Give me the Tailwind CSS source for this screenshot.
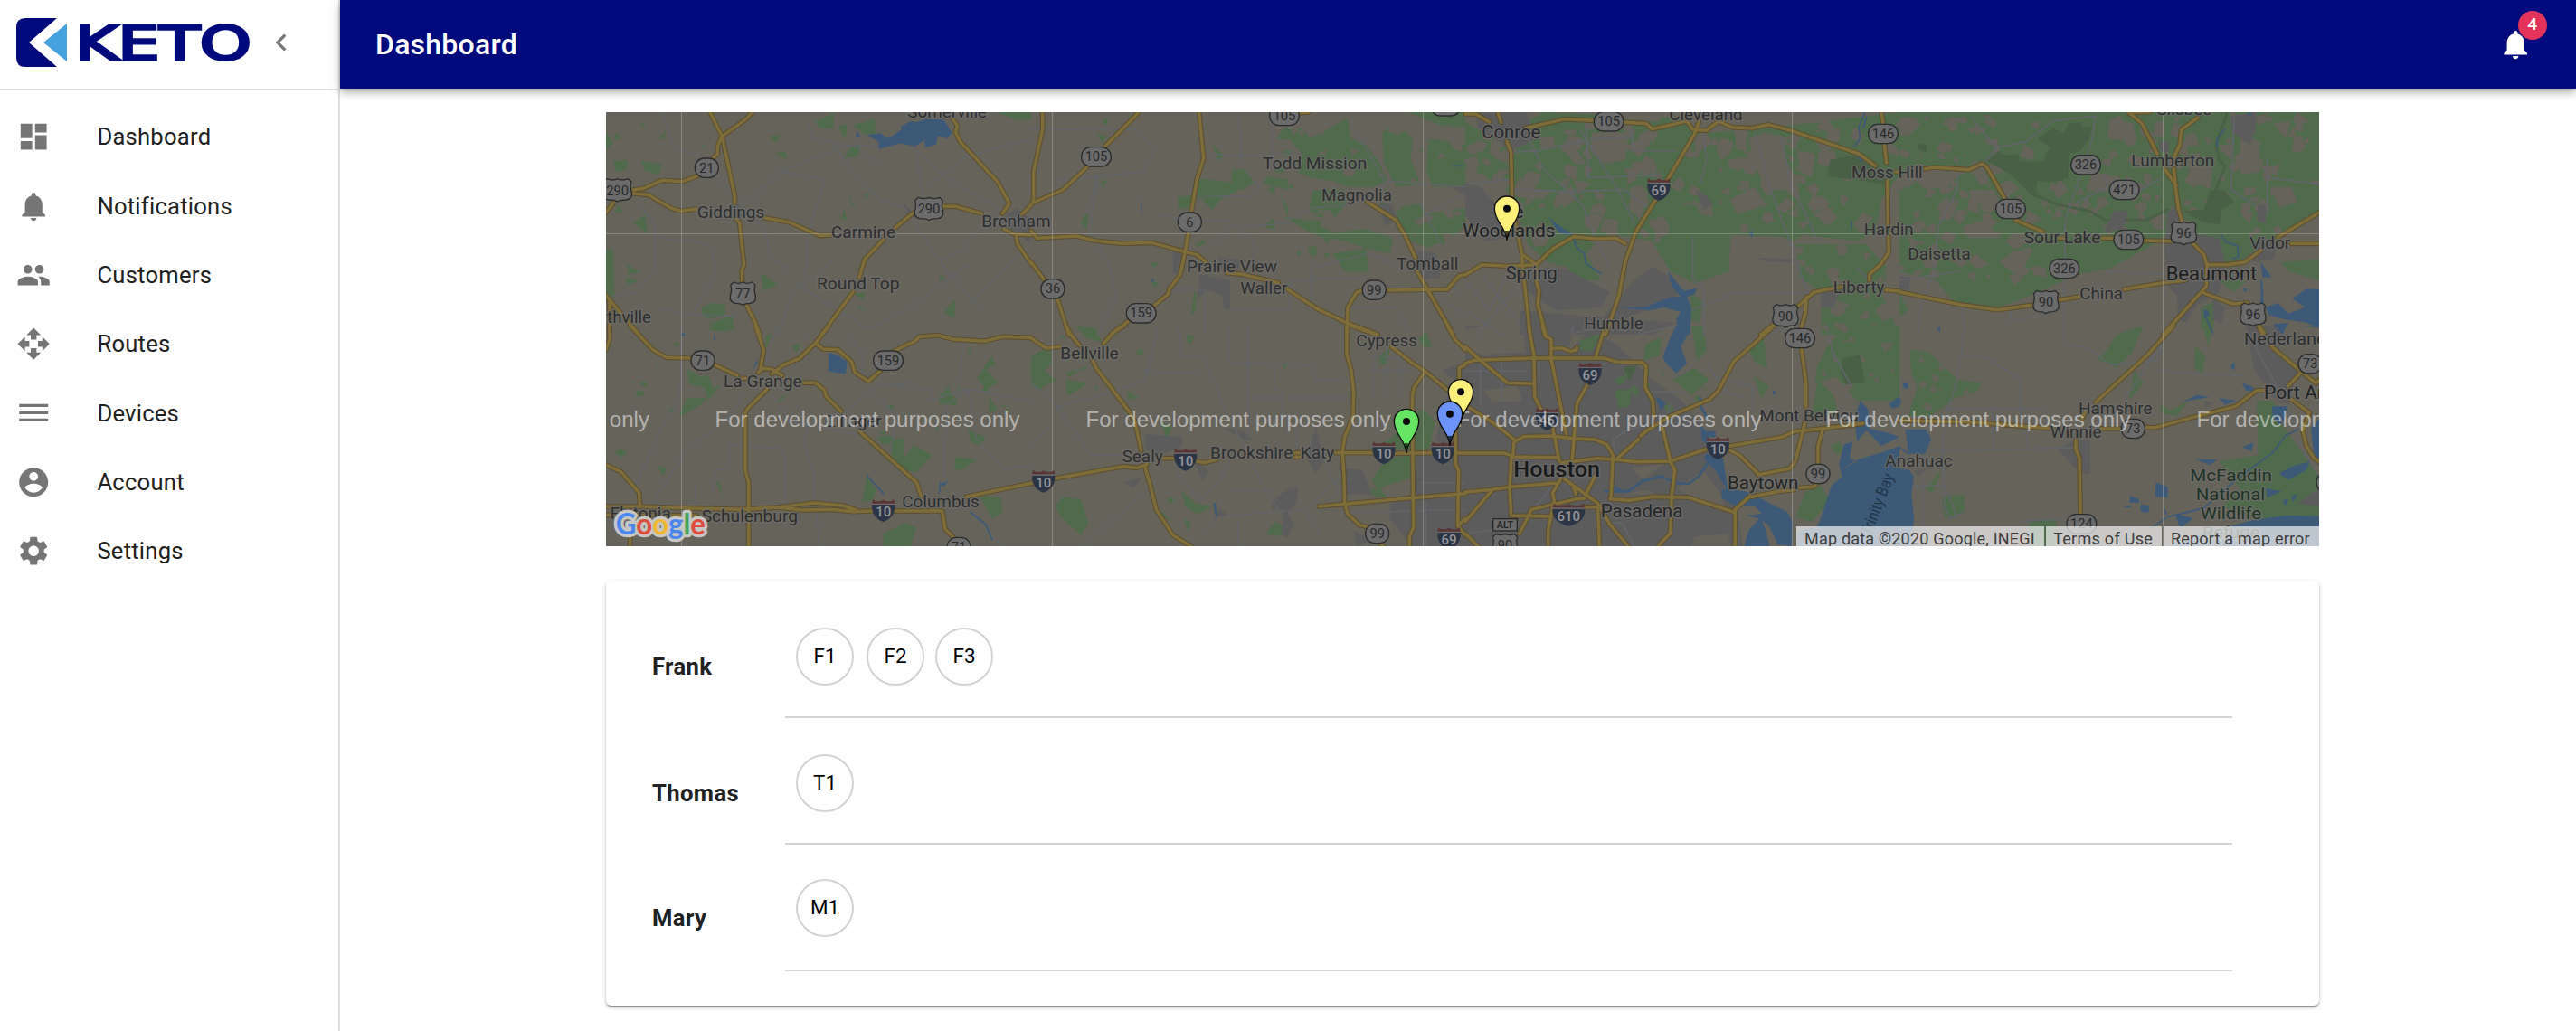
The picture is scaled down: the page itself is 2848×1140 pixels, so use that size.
<!DOCTYPE html>
<html lang="en">
<head>
<meta charset="utf-8">
<title>Dashboard</title>
<script src="https://cdn.jsdelivr.net/npm/@tailwindcss/browser@4"></script>
</head>
<body class="bg-white font-['Roboto',sans-serif] text-[#212121]">
<div class="flex h-[1140px] w-[2848px] overflow-hidden">

  <aside class="flex w-[376px] shrink-0 flex-col border-r-2 border-[#e0e0e0]">
    <div class="flex h-[100px] items-center border-b-2 border-[#e0e0e0] pb-1 pl-[18px]">
      <svg class="h-[54px] w-[56px]" viewBox="0 0 56 54" aria-hidden="true"><path fill="#000a7c" d="M10 0H45L14 27 45 54H10Q0 54 0 44V10Q0 0 10 0Z"/><path fill="#45a2df" d="M56 6V48L30 27Z"/></svg>
      <svg class="ml-2 h-[54px] w-[196px] overflow-visible" viewBox="0 0 196 54"><text x="1" y="45.500" font-family="DejaVu Sans" font-size="51" fill="#000a7c" stroke="#000a7c" stroke-width="3" textLength="195" lengthAdjust="spacingAndGlyphs">KETO</text></svg>
      <svg class="ml-[14px] size-[38px]" viewBox="0 0 24 24" fill="#757575"><path d="M15.410 7.410L14 6l-6 6 6 6 1.410-1.410L10.830 12z"/></svg>
    </div>
    <nav class="flex flex-col pt-[13.500px] text-[25.600px] tracking-[0.240px]">
      <a class="flex h-[76.330px] items-center gap-[51px] pl-[18px]"><svg class="size-[38.400px]" viewBox="0 0 24 24" fill="#757575"><path d="M3 13h8V3H3v10zm0 8h8v-6H3v6zm10 0h8V11h-8v10zm0-18v6h8V3h-8z"/></svg>Dashboard</a>
      <a class="flex h-[76.330px] items-center gap-[51px] pl-[18px]"><svg class="size-[38.400px]" viewBox="0 0 24 24" fill="#757575"><path d="M12 22c1.100 0 2-.9 2-2h-4c0 1.100.89 2 2 2zm6-6v-5c0-3.070-1.640-5.640-4.500-6.320V4c0-.83-.67-1.500-1.500-1.500s-1.500.67-1.500 1.500v.68C7.630 5.360 6 7.920 6 11v5l-2 2v1h16v-1l-2-2z"/></svg>Notifications</a>
      <a class="flex h-[76.330px] items-center gap-[51px] pl-[18px]"><svg class="size-[38.400px]" viewBox="0 0 24 24" fill="#757575"><path d="M16 11c1.660 0 2.990-1.340 2.990-3S17.660 5 16 5c-1.660 0-3 1.340-3 3s1.340 3 3 3zm-8 0c1.660 0 2.990-1.340 2.990-3S9.660 5 8 5C6.340 5 5 6.340 5 8s1.340 3 3 3zm0 2c-2.330 0-7 1.170-7 3.500V19h14v-2.500c0-2.330-4.670-3.500-7-3.500zm8 0c-.29 0-.62.020-.97.050 1.160.84 1.970 1.970 1.970 3.450V19h6v-2.500c0-2.330-4.670-3.500-7-3.500z"/></svg>Customers</a>
      <a class="flex h-[76.330px] items-center gap-[51px] pl-[18px]"><svg class="size-[38.400px]" viewBox="0 0 24 24" fill="#757575"><path d="M10 9h4V6h3l-5-5-5 5h3v3zm-1 1H6V7l-5 5 5 5v-3h3v-4zm14 2l-5-5v3h-3v4h3v3l5-5zm-9 3h-4v3H7l5 5 5-5h-3v-3z"/></svg>Routes</a>
      <a class="flex h-[76.330px] items-center gap-[51px] pl-[18px]"><svg class="size-[38.400px]" viewBox="0 0 24 24" fill="#757575"><path d="M2 15.500v2h20v-2H2zm0-5v2h20v-2H2zm0-5v2h20v-2H2z"/></svg>Devices</a>
      <a class="flex h-[76.330px] items-center gap-[51px] pl-[18px]"><svg class="size-[38.400px]" viewBox="0 0 24 24" fill="#757575"><path d="M12 2C6.480 2 2 6.480 2 12s4.480 10 10 10 10-4.480 10-10S17.520 2 12 2zm0 3c1.660 0 3 1.340 3 3s-1.340 3-3 3-3-1.340-3-3 1.340-3 3-3zm0 14.200c-2.500 0-4.710-1.280-6-3.220.030-1.990 4-3.080 6-3.080 1.990 0 5.970 1.090 6 3.080-1.290 1.940-3.500 3.220-6 3.220z"/></svg>Account</a>
      <a class="flex h-[76.330px] items-center gap-[51px] pl-[18px]"><svg class="size-[38.400px]" viewBox="0 0 24 24" fill="#757575"><path d="M19.140 12.940c.040-.3.060-.61.060-.94 0-.32-.020-.64-.070-.94l2.030-1.580c.18-.14.23-.41.120-.61l-1.920-3.320c-.12-.22-.37-.29-.59-.22l-2.390.96c-.5-.38-1.030-.7-1.620-.94l-.36-2.540c-.040-.24-.24-.41-.48-.41h-3.840c-.24 0-.43.17-.47.41l-.36 2.540c-.59.24-1.130.57-1.620.94l-2.390-.96c-.22-.080-.47 0-.59.22L2.740 8.870c-.12.21-.080.47.120.61l2.030 1.580c-.050.3-.090.63-.090.94s.020.64.070.94l-2.030 1.580c-.18.14-.23.41-.12.61l1.920 3.320c.12.22.37.29.59.22l2.390-.96c.5.38 1.030.7 1.620.94l.36 2.540c.050.24.24.41.48.41h3.840c.24 0 .44-.17.47-.41l.36-2.540c.59-.24 1.130-.56 1.620-.94l2.390.96c.22.080.47 0 .59-.22l1.920-3.320c.12-.22.070-.47-.12-.61l-2.010-1.580zM12 15.600c-1.980 0-3.600-1.620-3.600-3.600s1.620-3.600 3.600-3.600 3.600 1.620 3.600 3.600-1.620 3.600-3.600 3.600z"/></svg>Settings</a>
    </nav>
  </aside>

  <div class="flex flex-1 flex-col">
    <header class="flex h-[98px] shrink-0 items-center justify-between bg-[#000a7c] pl-[39px] pr-[48px] text-white shadow-[0_3px_6px_-2px_rgba(0,0,0,0.2),0_6px_8px_0_rgba(0,0,0,0.14),0_2px_16px_0_rgba(0,0,0,0.12)]">
      <h1 class="text-[32px] font-medium leading-none tracking-[0.240px]">Dashboard</h1>
      <div class="relative size-[38.400px]">
        <svg class="size-[38.400px]" viewBox="0 0 24 24" fill="#fff"><path d="M12 22c1.100 0 2-.9 2-2h-4c0 1.100.89 2 2 2zm6-6v-5c0-3.070-1.640-5.640-4.500-6.320V4c0-.83-.67-1.500-1.500-1.500s-1.500.67-1.500 1.500v.68C7.630 5.360 6 7.920 6 11v5l-2 2v1h16v-1l-2-2z"/></svg>
        <span class="absolute -top-[18px] left-[22px] flex size-8 items-center justify-center rounded-full bg-[#e3335b] text-[19.200px] font-medium">4</span>
      </div>
    </header>

    <main class="flex flex-col gap-[38px] pl-[294px] pt-[26px]">
      <section class="relative h-[480px] w-[1894px] overflow-hidden bg-[#66635b]">
        <svg id="map" class="block h-[480px] w-[1894px]" viewBox="670 124 1894 480" font-family="Roboto"></svg>
        <div class="absolute bottom-0 right-0 flex h-[22px] gap-[2px] overflow-hidden whitespace-nowrap text-[18px] leading-[28px] text-[#3c3c3c]">
          <span class="w-[274px] bg-[#f5f5f5]/70 pl-[9px] tracking-[0.200px]">Map data ©2020 Google, INEGI</span>
          <span class="w-[128px] bg-[#f5f5f5]/70 pl-[8px] tracking-[0.300px]">Terms of Use</span>
          <span class="w-[172px] bg-[#f5f5f5]/70 pl-[8px] tracking-[0.200px]">Report a map error</span>
        </div>
      </section>

      <section class="h-[470px] w-[1894px] rounded-[6px] bg-white pl-[51px] pt-3 shadow-[0_2px_5px_0_rgba(0,0,0,0.2),0_2px_2px_0_rgba(0,0,0,0.14),0_3px_2px_-2px_rgba(0,0,0,0.3)]">
        <div class="flex h-[140px]">
          <div class="w-[147px] pt-[68px] text-[25.600px] font-bold leading-[30px] tracking-[0.400px]">Frank</div>
          <div class="flex w-[1600px] border-b-2 border-[#d3d3d3] pl-3 pt-10 text-[22.400px] text-black">
            <div class="flex size-16 items-center justify-center rounded-full border-2 border-[#d3d3d3]">F1</div>
            <div class="ml-[14px] flex size-16 items-center justify-center rounded-full border-2 border-[#d3d3d3]">F2</div>
            <div class="ml-3 flex size-16 items-center justify-center rounded-full border-2 border-[#d3d3d3]">F3</div>
          </div>
        </div>
        <div class="flex h-[140px]">
          <div class="w-[147px] pt-[68px] text-[25.600px] font-bold leading-[30px] tracking-[0.400px]">Thomas</div>
          <div class="flex w-[1600px] border-b-2 border-[#d3d3d3] pl-3 pt-10 text-[22.400px] text-black">
            <div class="flex size-16 items-center justify-center rounded-full border-2 border-[#d3d3d3]">T1</div>
          </div>
        </div>
        <div class="flex h-[140px]">
          <div class="w-[147px] pt-[66px] text-[25.600px] font-bold leading-[30px] tracking-[0.400px]">Mary</div>
          <div class="flex w-[1600px] border-b-2 border-[#d3d3d3] pl-3 pt-[38px] text-[22.400px] text-black">
            <div class="flex size-16 items-center justify-center rounded-full border-2 border-[#d3d3d3]">M1</div>
          </div>
        </div>
      </section>
    </main>
  </div>
</div>

<script>
// Map sheets: each holds coordinates at three units per pixel from its own origin.
const O = {A:[660,110],B:[1140,110],C:[1620,110],D:[2100,110],G:[660,360],H:[1140,360],I:[1620,360],J:[2100,360]};
const LAND='#66635b', GREEN='#4f6b4b', DARK='#4a6046', WATER='#3c5a78', URBAN='#5c5c5d', MINOR='#62656a';
let out='';
const g=(k,s)=>{out+=`<g transform="translate(${O[k]}) scale(.33333)">${s}</g>`};
const polys=(k,c,list)=>g(k,list.split(';').map(p=>`<polygon fill="${c}" points="${p.trim()}"/>`).join(''));
const lines=(k,c,w,list)=>g(k,list.split(';').map(p=>`<polyline fill="none" stroke="${c}" stroke-width="${w}" stroke-linejoin="round" stroke-linecap="round" points="${p.trim()}"/>`).join(''));
let seed=7; const rnd=()=>(seed=(seed*16807)%2147483647)/2147483647;
// Irregular field and woodland parcels inside a rectangle.
function scatter(k,c,x,y,w,h,n,size){
  let s='';
  for(let i=0;i<n;i++){
    const cx=x+rnd()*w, cy=y+rnd()*h, r=size*(.35+rnd()*.8), m=3+Math.floor(rnd()*4), a0=rnd()*6.28;
    let p='';
    for(let j=0;j<m;j++){const a=a0+j*6.283/m+rnd()*.7, q=r*(.45+rnd()*.75); p+=(cx+Math.cos(a)*q).toFixed(0)+','+(cy+Math.sin(a)*q*.9).toFixed(0)+' ';}
    s+=`<polygon fill="${c}" points="${p}"/>`;
  }
  g(k,s);
}

// Woodland
polys('A',GREEN,'30,495 55,498 58,660 30,655;348,690 380,675 425,680 425,715 370,728 348,715;370,745 450,715 455,765 410,760;545,575 600,615 552,635;55,205 100,200 100,230 60,240;145,205 215,215 205,250 160,235;722,75 785,45 785,95 740,95;850,85 920,65 925,115 885,115;800,90 830,80 825,135;100,545 145,575 103,578;98,590 140,602 100,615;568,122 615,118 590,142;592,180 625,170 630,198;835,315 860,365 845,350;820,365 828,398 810,398;885,315 908,310 892,328;30,105 52,145 30,170;1325,42 1440,42 1440,65 1395,68;1150,705 1190,660 1185,725;840,160 875,150 865,190 820,195;1135,580 1155,590 1140,603;852,645 890,640 880,665;862,682 895,698 870,696;60,110 82,128 58,135;205,130 228,103 222,132;340,165 360,140 352,160;60,375 70,350 88,375;120,410 160,380 168,445 145,430;138,85 160,78 158,93');
polys('B',GREEN,'215,110 250,120 240,145;555,262 660,275 690,300 630,330 600,365 565,330 550,330;485,325 530,318 535,365 490,360;665,235 710,230 740,275 700,300 665,290;815,130 840,92 900,95 925,130 1000,90 1050,62 1060,130 1110,150 1150,200 1180,270 1140,290 1050,290 1000,270 930,260 880,240 900,180 860,135;1165,110 1210,75 1265,130 1260,200 1290,280 1210,290 1170,210;1320,130 1440,150 1440,290 1330,290 1310,230;935,300 1040,300 1050,340 1000,400 920,380;1000,510 1110,495 1120,570 1040,570;840,390 920,400 1000,440 1110,430 1200,460 1190,510 1100,490 1040,470 940,450;1210,360 1290,345 1310,380 1440,360 1440,420 1340,500 1260,470 1210,430;1250,42 1440,42 1440,90 1370,90;780,255 850,265 855,300 770,280;830,320 855,360 850,390;600,150 640,185 620,205;175,385 190,380 185,430 165,410;555,475 578,465 575,480 545,488;540,640 548,635 545,700 530,718;390,540 425,543 405,558;400,600 430,615 405,622;235,70 258,62 248,88;230,275 255,265 235,295');
polys('C',GREEN,'0,75 100,130 260,42 680,60 800,110 1000,95 1440,42 1440,250 1380,330 1360,440 1300,470 1120,450 1085,470 1050,455 880,450 875,570 760,610 680,570 620,470 500,450 430,480 360,560 270,540 200,470 160,330 60,250 0,230;380,480 450,600 380,600 340,560;1095,480 1330,480 1400,560 1380,640 1440,780 1180,780 1180,640 1110,590;750,640 785,670 780,740 745,730');
polys('D',GREEN,'0,42 1392,42 1392,370 1290,440 1180,500 1100,560 1000,480 890,440 860,470 700,560 590,580 460,640 330,690 180,670 120,600 0,570;1060,600 1150,600 1110,640;1265,540 1392,530 1392,600 1290,570;1000,690 1050,670 1040,760 1000,760;0,640 30,700 0,720');
polys('G',GREEN,'300,145 345,170 370,165 385,210 410,195 370,250 355,205 305,195;980,375 1020,375 1020,440 1050,395 1110,430 1060,485 1000,480 975,430;370,15 385,0 455,0 430,20;1260,175 1310,100 1320,130 1290,145 1330,190 1290,210;1135,235 1165,205 1185,240 1200,230 1190,265 1135,260;930,370 975,365 985,390 945,395;895,495 925,545 915,580 880,585;60,420 80,408 100,422 80,438;200,465 230,475 220,500;395,520 408,520 420,570;300,240 270,305 340,265 365,240;1270,565 1340,570 1345,620 1310,640;1185,475 1190,435 1260,445 1210,480;950,690 1025,655 1060,670 1040,732 950,732;600,250 630,225 610,255;560,30 580,28 560,80;1230,345 1290,370 1270,400 1240,385;645,65 678,62 660,90;1300,235 1330,280 1300,290');
polys('H',GREEN,'80,600 105,568 165,577 190,655 165,695 100,635;1130,510 1180,440 1260,430 1260,505 1180,530 1150,545;1150,400 1200,370 1275,290 1305,278 1340,320 1320,410 1250,415;0,100 60,70 70,120 45,150 85,180 30,210 0,200;430,320 470,335 450,375;425,610 480,660 430,625;500,548 545,590 600,600 550,625 510,600;515,30 540,35 530,60 518,55;835,125 850,125 842,152;780,690 810,648 840,670 830,700;115,180 190,190 120,235;450,568 482,575 460,590;1285,40 1310,20 1330,70 1300,72;1155,100 1190,75 1180,130 1155,125;320,215 360,240 320,245;115,150 145,160 125,172;340,90 370,75 370,98;505,640 530,655 520,682;1120,545 1160,540 1180,572 1140,565;150,0 180,40 235,55 215,10');
polys('I',URBAN,'0,0 370,0 500,60 620,180 720,250 780,330 850,440 860,560 900,600 920,732 0,732');
polys('I',LAND,'0,15 60,0 190,0 200,90 60,95 0,90;60,215 170,200 190,250 90,255;700,540 790,480 850,560 860,600 790,590;760,700 870,690 880,732 750,732;550,470 660,460 590,510;520,560 600,545 640,560;840,240 1000,240 1010,330 880,350;360,0 430,0 340,90');
polys('I',GREEN,'380,50 450,25 420,85 380,80;600,60 650,40 645,100 590,115;495,215 550,210 545,270 510,275;690,180 760,140 810,180 750,230;525,140 570,150 530,180;1200,70 1260,0 1440,0 1440,250 1300,250 1230,170 1160,190 1165,140;940,80 990,40 1000,140 960,120;1210,400 1240,385 1255,410 1235,430;1130,550 1180,535 1210,580 1150,650 1095,635;750,0 790,0 800,80 770,120;1170,180 1220,230 1240,300 1150,300 1160,230;960,170 1010,200 980,240');
polys('J',GREEN,'35,80 100,90 140,130 195,180 270,190 260,215 190,240 160,260 100,300 30,300 60,200 40,160;720,30 810,0 770,90 720,140 655,110 690,80;780,150 810,190 760,250;1185,250 1240,250 1270,330 1392,500 1392,640 1180,640 1070,600 1130,540 1060,450 1190,430;980,70 1015,100 1005,160 980,140;1005,0 1040,0 1025,70;140,570 215,560 215,620 150,640;90,540 140,475 110,560;865,260 900,280 960,250 920,300 870,290;430,645 520,645 520,732 430,732');
// Clearings
polys('C',LAND,'420,110 540,110 530,200 460,215 415,170;490,42 660,42 640,75 500,62;940,130 990,110 1050,120 1060,200 1100,260 1110,340 1060,300 1000,300 960,220;150,290 290,300 260,330 170,325;880,330 960,290 1000,350 900,380;560,290 600,330 580,400 540,360;1100,170 1160,180 1150,260 1110,240;580,110 620,120 600,150 570,140');
polys('D',LAND,'0,60 60,60 40,110 0,120;60,210 190,250 180,280 90,300 40,260;230,300 320,300 300,350 240,340;140,350 200,330 170,400 130,400;210,420 290,400 330,460 230,460;380,500 440,500 400,590 330,540;410,150 450,170 440,200 400,190;700,60 780,80 770,140 690,130;640,240 700,250 690,310 620,300;960,210 1040,220 1030,290 960,280;1130,130 1190,150 1200,240 1130,250;1230,290 1300,290 1320,340 1260,360;1240,80 1300,70 1280,130');
scatter('B',LAND,840,90,590,420,36,28);
scatter('C',LAND,20,80,640,390,110,36);
scatter('C',LAND,700,90,730,340,60,34);
scatter('C',LAND,1100,480,330,290,24,30);
scatter('D',LAND,0,60,460,540,95,34);
scatter('D',LAND,480,280,560,150,40,28);
scatter('D',LAND,660,60,380,220,30,30);
scatter('D',LAND,1060,60,320,400,46,30);
scatter('I',LAND,1180,10,250,220,12,22);
scatter('J',LAND,60,100,170,180,14,16);
scatter('B',GREEN,760,100,600,460,26,20);
scatter('I',GREEN,480,150,330,160,10,20);
scatter('G',GREEN,920,60,480,420,10,14);
scatter('G',GREEN,40,40,260,260,8,15);
scatter('H',GREEN,20,10,300,200,8,14);
// Deep forest
polys('D',DARK,'460,130 510,95 545,110 560,80 600,75 605,90 640,90 630,130 600,170 565,180 560,260 520,272 455,272 455,310 480,330 525,350 440,320 370,250 290,205 330,170 350,185 395,180 400,205 480,205 485,180 500,160;1030,300 1075,300 1110,340 1070,365 1060,415 1000,405 940,370 1010,365;60,148 90,148 90,178 62,165');
polys('C',DARK,'1210,200 1320,180 1400,250 1390,280 1200,255');
lines('D',DARK,9,'480,330 530,350 630,370 680,400 750,400 820,400 890,365;1085,50 1050,150 1060,200 1080,220 1050,300');
polys('I',DARK,'1250,110 1310,95 1325,190 1260,195 1245,150;525,140 570,130 545,180');
// Built-up areas
polys('C',URBAN,'0,280 50,290 120,370 140,460 60,470 0,380;35,45 200,42 240,130 150,170 40,90;560,600 620,555 680,590 720,640 640,680 500,740 460,720;160,560 330,560 480,640 450,690 300,700 210,640;765,300 800,320 825,345 790,365;1180,620 1240,640 1220,690 1180,690;180,700 420,720 700,740 620,780 180,780;965,525 1090,530 1080,540 1000,538');
polys('B',URBAN,'470,500 510,520 500,580 470,575;560,580 660,600 660,695 640,695 635,650 580,630 550,665;1150,350 1195,345 1215,400 1175,420;1280,500 1340,510 1360,590 1290,600;1400,290 1440,285 1440,325;620,525 690,530 690,560 630,560');
polys('D',URBAN,'890,370 930,355 950,440 1060,460 1080,540 1060,640 990,680 950,740 925,730 920,650 890,620 880,500;1100,55 1185,42 1180,110 1160,150 1105,110;710,370 760,370 740,430 680,440;1190,350 1215,350 1215,410 1185,400;1200,450 1250,490 1240,530 1170,540;860,140 895,140 890,180 865,170;0,585 35,590 30,650 0,650;1040,660 1080,690 1070,745 1040,730');
polys('H',URBAN,'1270,430 1440,430 1440,732 1260,732 1190,640 1190,590 1260,560;1020,470 1100,480 1130,560 1040,560;915,440 945,330 970,450 945,490;800,580 855,540 885,535 880,590 850,620 870,660 850,705 830,690 840,610 800,610;540,450 590,480 570,515;640,340 700,350 740,380 710,380;380,360 500,370 500,400 430,430 380,410;1380,240 1440,230 1440,420 1340,380;1360,150 1440,120 1440,200;310,520 370,500 340,540;610,600 650,625 610,640;1070,680 1130,710 1080,732');
polys('J',URBAN,'1150,0 1260,0 1260,90 1320,150 1290,260 1240,240 1175,140;525,410 580,380 632,380 632,492 600,490;1320,590 1392,540 1392,600;1010,250 1040,255 1015,275;45,480 90,475 60,500');
polys('A',URBAN,'1360,380 1395,360 1440,400 1435,480 1400,440 1350,430;1020,350 1045,370 1025,385;440,345 470,330 480,395 450,400');

// Secondary roads
lines('A',MINOR,4,'215,50 260,160 340,190 500,370 560,440 575,520 635,565;770,125 840,225 940,335 1020,360 1140,540 1240,660 1290,700;490,350 610,240 830,150 1060,160;195,460 330,470 380,495 395,580 320,710;140,350 190,410 195,560 130,640 40,655;615,240 755,265 700,450 690,600;1140,535 1210,500 1330,360 1160,260 1060,170 1080,330;1240,670 1440,480;660,610 900,760 1040,690 1240,540;1100,290 1220,190 1440,130;700,80 720,130 870,160 950,230;200,690 280,710 460,720;790,530 650,640 600,780');
lines('B',MINOR,4,'0,100 350,98 410,170 370,240 90,270;190,375 220,250 195,440 260,550 280,660 220,780;420,380 500,400 650,400 740,470 740,560;550,180 690,185 880,180;690,60 700,220 760,300 720,320 640,320 550,325;850,400 930,360 1060,350 1180,280 1060,80;580,500 660,425 860,410;930,700 930,560 1120,510 1260,570;1180,270 1440,290;460,630 575,630 575,780;660,695 860,695 860,600 1120,590;1310,380 1410,330 1440,310;1290,340 1360,480;1340,640 1440,720;1380,600 1440,660;800,240 800,50;1040,690 1210,690 1250,760');
lines('C',MINOR,5,'150,175 240,170 430,130 560,125;210,130 260,230 390,350 440,480 480,560;160,300 330,305 530,300 620,370;560,410 500,290 380,100;550,100 560,170 700,170;960,110 1010,290 1080,480 1135,640;1050,130 1080,280 1170,470;790,100 800,200 780,280;0,280 160,265;400,80 410,260 640,250;755,455 755,600 790,620 790,780;1135,645 900,640 700,720;1300,560 1380,640;0,600 80,700 150,560;40,780 170,620;0,700 120,780;60,590 180,740');
lines('D',MINOR,5,'650,50 640,130 550,400 545,760;240,60 320,160 420,140 510,70 650,55;320,165 280,210;195,240 190,300 130,420 110,590 70,680 60,780;590,340 690,290 680,250;800,300 870,260;1110,60 1100,300 1180,350;1220,200 1220,380;1220,260 1392,280;0,600 200,570;210,690 215,780;370,700 370,735 530,700;690,570 880,580 880,640');
lines('G',MINOR,4,'280,0 275,240 215,340 170,440 110,560;440,390 435,475 390,480 385,560;440,395 520,400 620,410 625,600;490,230 430,310 300,410 180,590;600,0 560,120;680,10 700,40;820,20 880,90 880,170;720,600 720,480 690,400 695,320;940,240 990,300 975,420;970,195 1110,215 1105,250 1230,210;1240,210 1160,260 1150,500;1230,210 1260,380 1350,480 1440,460;1220,20 1200,210;730,620 735,732;1260,640 1340,732;810,300 930,200 1050,190;580,230 640,320 860,360;1230,210 1440,250;325,530 325,600');
lines('H',MINOR,4,'85,270 200,240 380,180 420,0;85,270 200,430 300,430;85,265 0,190;490,0 500,100 570,100 650,290 720,430;655,0 655,125 940,130 940,180 1060,185;720,0 720,370;720,240 1060,240;805,130 805,210 835,215 835,300;370,150 560,160;0,400 60,330;480,480 560,580 620,520 660,450;610,635 910,610 960,700;685,640 685,732;170,732 370,560;560,690 620,640;730,460 820,610;660,545 800,550;880,440 880,300 720,320;920,600 1030,500;940,640 1060,500;980,470 1030,570;1120,100 1250,110;1120,150 1250,150;1140,60 1140,240;1180,60 1180,240;1220,60 1220,240;1060,620 1440,610;1290,520 1440,522;1310,590 1310,732');
lines('I',MINOR,5,'500,440 490,380 530,350 600,330;0,150 200,150;50,120 50,260;120,120 120,250;350,30 360,0;360,25 480,0;570,30 700,0;600,220 720,220;680,260 660,330;700,170 760,130;860,180 950,200 960,340;800,130 870,220 920,240;1220,90 1280,200;210,630 290,530;465,655 520,655 560,732;0,690 90,680;905,670 905,732;1200,0 1220,100;990,20 1110,10');
lines('J',MINOR,5,'215,0 205,100 185,210 160,270 140,410 40,420;205,102 290,105 400,180 400,280 430,405;140,415 580,405;165,275 480,275;310,280 310,405;545,0 550,60 630,75 700,130 860,115 870,60 750,240;860,150 1000,160 1140,165;80,500 75,732;50,530 150,530 190,630;145,420 150,600 170,640 210,620;1160,30 1250,200;1290,280 1330,400 1390,500;400,650 540,640');

// Water
polys('A',WATER,'895,118 940,112 965,130 1010,100 1008,90 1040,72 1060,75 1090,65 1150,67 1178,110 1160,130 1130,120 1125,150 1090,158 1085,135 1055,155 1005,145 935,165 935,140;858,130 862,105 875,122;280,772 295,780 280,780');
polys('B',WATER,'365,330 368,350 365,375 374,383 363,370;390,602 408,594 405,605;1395,218 1440,216 1415,224');
polys('C',WATER,'672,570 700,605 725,635 770,625 760,645 735,655 750,690 745,780 705,780 700,730 715,705 660,690 610,700 510,690 600,688 655,665 690,655 715,655 685,620;275,390 320,425 355,445 335,450 310,440;940,445 953,433 953,458;1295,180 1320,190 1315,210;1277,400 1284,410 1282,440');
lines('C',WATER,5,'350,445 370,490 395,512 400,545 450,577;1325,45 1305,90 1310,130 1290,155;1330,60 1320,95');
polys('D',WATER,'1198,540 1235,590 1205,590;1303,660 1350,628 1392,630 1392,760 1350,740 1280,730 1225,715 1215,690 1255,675 1290,710 1345,690;1140,627 1155,628 1146,642;1008,700 1022,697 1028,715 1012,725;123,763 135,755 135,773;1152,50 1160,42 1172,52;1205,605 1208,680 1215,690 1195,690;1240,745 1290,740 1270,780');
lines('D',WATER,5,'1080,98 1055,130 1053,155;1070,450 1080,470 1120,485 1125,520 1105,530;1015,720 1040,775;1200,600 1203,690');
polys('G',WATER,'768,90 800,98 815,112 830,118 825,160 768,152;516,150 530,112 532,125;388,25 393,40 387,55;280,25 295,32 282,34;1140,525 1165,515 1150,535');
lines('G',WATER,5,'895,497 950,557;1140,520 1135,555;1240,620 1290,660 1310,708');
polys('H',WATER,'603,588 613,590 617,632 612,632');
polys('I',WATER,'740,0 735,35 715,70 735,125 700,158 670,130 655,105 680,40 700,0;630,235 665,255 650,285;1310,250 1335,275 1345,330 1300,385 1290,310;1440,400 1385,420 1300,445 1245,480 1240,460 1255,395 1285,385 1275,440 1300,450 1245,480 1250,500 1215,530 1175,650 1165,668 1105,680 1098,732 1440,732;925,732 940,680 975,640 930,630 985,625 960,600 900,600 850,572 850,545 865,540 830,480 790,440 800,425 855,440 870,540 950,555 1010,590 1070,620 1085,650 1082,732 1032,725 985,640 1010,732;780,330 800,350 830,350 830,370 800,370 805,395 785,380;1018,213 1032,222 1022,232;1405,260 1440,235 1440,270 1415,275;1310,325 1350,345 1400,355 1440,370 1380,400');
lines('I',WATER,8,'465,550 540,550 590,515 650,500 700,522 740,525 775,500 815,440;780,240 782,270 805,310;480,530 520,548');
polys('I',LAND,'985,650 1005,660 1035,722 1020,724');
polys('J',WATER,'20,345 90,345 105,378 85,425 30,425;0,475 30,478 48,500 40,560 48,640 40,732 0,732;1365,340 1392,310 1392,440 1375,430;850,520 890,535 890,570 848,568;765,565 795,575 795,588 763,587;800,593 828,597 826,620 800,618;980,443 1055,445 1030,462;1260,490 1300,468 1362,450 1348,480 1290,512;1175,645 1280,630 1392,632 1392,732 880,732 1000,690;915,625 975,640 930,672;1235,268 1287,268 1282,300 1262,330 1240,308;1137,403 1175,388 1168,418;1097,135 1112,122 1112,150;935,255 985,230 1030,238 960,248;1135,190 1165,200 1195,225 1150,215;1060,240 1120,250 1080,262;740,600 770,597 765,605;1215,540 1268,550 1220,570;1270,580 1290,575 1280,598;1300,565 1322,560 1305,585;10,190 30,192 28,210 12,205;1340,0 1392,0 1392,8;920,482 942,500;0,240 6,250 0,265');
lines('J',WATER,5,'840,668 890,635 1010,605 1130,500 1240,420 1280,365 1320,345;0,405 30,425;875,600 885,625');

// Trunk roads: casing first, then fill
const R={
A:'375,42 415,122 458,325 456,345;462,395 473,410 488,548 480,570 482,605;495,680 525,740 540,780;515,42 495,65 415,122 400,155 400,180 385,195;25,380 50,350 60,330;120,300 155,295 215,268 285,272 335,253;120,312 170,316 245,360 280,370 330,363;555,392 640,408 740,452 775,450;990,425 1050,375;950,465 888,530 870,590;850,638 745,780;1150,355 1190,355 1275,378;1180,65 1195,85 1190,110 1205,140 1330,275 1368,345 1345,378;1410,380 1440,350;1350,430 1385,447 1440,450;1390,450 1395,480 1440,545;30,650 75,705 140,780;42,665 42,780',
B:'0,345 105,300 185,225;245,155 350,50 355,42;0,435 20,460 150,453 210,468 300,478 400,475 510,505 550,515 580,540;0,540 45,600;38,42 38,100 8,240 8,340;557,42 572,195 550,265 532,370;522,440 510,510 495,580 458,630 455,645 410,682;325,733 265,780;88,662 125,780;650,575 700,580 785,600 820,608;850,630 950,695 1045,740 1150,780;890,45 920,42;1115,340 1210,400 1240,450 1275,525;1280,570 1400,780;1440,580 1420,585 1380,630 1180,633;1100,633 1080,640 1050,690 1048,780',
C:'0,48 35,48 80,75;200,95 330,65 430,70;525,75 600,80 620,98 735,72 755,100 800,103 840,72 885,92 950,95 1005,83 1080,103 1305,180 1360,220;108,42 118,75;138,140 152,175 155,330;165,400 188,515 190,550 215,780;775,75 760,115 630,335 565,440 530,540 510,650 465,780;0,582 55,548 140,553 235,548 290,495 360,455 435,462 500,460 530,478;190,515 235,548 237,610 245,635 240,680 267,780;1380,42 1386,80;1390,148 1397,210;1400,270 1402,400 1405,505 1380,545 1340,580 1340,600;1250,622 1200,630 1155,640 1105,685;1025,745 980,780;1132,655 1128,710 1115,755;1428,240 1438,240;1395,632 1440,636',
D:'0,638 200,680 325,698 440,682;530,665 595,655;745,630 875,608 950,600;85,230 115,225 230,233 275,213 290,225 350,330;385,400 475,438;530,460 550,460;670,460 715,460;810,468 900,470;760,42 805,80 855,180;830,42 775,42;880,230 918,285;990,60 935,100 930,150 912,190;910,230 915,285 925,360 937,405;975,478 1010,515 1020,550 1018,620 875,780;1020,548 1085,548 1145,540 1200,500;1392,375 1255,457;1005,640 1105,678 1155,675;1190,750 1205,780;1300,478 1392,478',
G:'525,0 553,80 543,140;770,0 725,58 670,110 620,130 580,160;110,0 185,80 230,106 310,108;42,0 42,45 30,80;30,462 80,485 140,555 142,595;30,600 150,600 340,607 480,610 600,603 720,588 815,597 860,612;30,628 330,630;600,603 680,612 780,610 850,617 915,615;985,615 1145,615 1155,675 1185,705;110,700 110,732;535,155 550,142 580,145 615,165;480,175 495,175;685,190 725,190 755,215 760,235 810,285;565,210 500,275 492,290 492,480 503,520 503,732;390,130 465,165;725,58 750,78 800,80 845,120 855,155 900,185 940,150;985,85 1035,60 1050,55 1070,37 1130,32 1180,45 1285,52 1345,37 1440,40;870,350 1060,520 1075,565;1225,568 1440,523',
H:'0,42 50,75 95,70;115,0 135,35 160,65;240,60 275,20 310,0;205,118 215,140 325,285 345,320 365,415;378,470 395,530 415,610 470,695 530,732;0,525 5,523;80,507 305,467 350,472 385,460;435,440 475,440;550,450 575,455 615,445;875,422 890,422;875,436 890,436;1010,422 1135,422;1210,424 1330,422;1402,422 1440,423;955,600 1040,592 1255,572 1440,557;1047,0 1047,95 1062,150 1070,220 1068,300 1040,370 1033,420 1038,500 1040,590 1050,625 1090,662 1115,668;1160,725 1168,732;1060,0 1145,30;1195,70 1265,125 1305,150 1395,225;1305,155 1270,205 1264,235 1268,670 1255,700 1255,732;1380,0 1405,45 1440,80;1440,130 1420,140 1420,185;1408,330 1408,460 1418,480 1415,665 1440,695;1440,640 1415,665',
I:'0,125 30,115 230,108 430,108 460,108 500,120 585,122 600,135 597,205 622,250 625,300;210,0 228,100 230,235 250,275;255,0 265,35 285,45 285,110 335,360;285,75 320,75 350,85 368,82 370,72;465,0 432,105;405,195 370,260 355,440;0,70 50,115 140,190 220,193;0,265 90,320 165,380;0,423 130,423 160,435 310,437;158,430 162,385 195,368 290,366 360,375 430,378 470,395 490,430 483,575;290,340 312,450;320,455 440,440 500,445 570,452 680,450 800,410;875,400 1050,370 1090,352 1200,340 1320,325;505,440 575,377;582,365 600,350 680,300 810,245 840,215 880,140 890,120 1025,0;655,340 680,450 695,480 685,560 680,690 650,720 640,732;0,552 80,545 150,535 300,523;318,505 290,555 295,580 275,680 275,732;153,435 147,540 152,630 285,633;180,690 200,650 220,610 370,575 395,573;0,650 90,545;0,690 42,732;330,510 440,590 480,660 540,732;395,602 440,602;440,610 445,732;430,500 402,555;360,540 367,558;480,575 545,580 620,568 740,570 890,618;895,732 895,610 945,565;950,568 1040,550 1090,545;1110,538 1155,535 1165,525;880,415 910,430 970,490;1115,75 1130,190 1130,270;1128,315 1095,450 1075,475 970,495;1185,345 1170,400 1170,460',
J:'0,315 240,320 480,340 510,340;670,342 735,342;815,338 850,338 960,308 1115,268 1185,215 1208,215;910,0 820,100 650,255;615,290 605,310;585,380 585,410 597,440 600,625;1192,0 1210,25;1235,70 1330,150 1382,192 1392,180;1332,155 1290,200;1300,245 1360,290 1338,350 1350,400 1375,440 1392,452'};
for(const k in R) lines(k,'#5b4f30',17,R[k]);
for(const k in R) lines(k,'#7e6d38',10.5,R[k]);

// Sheet seams
out+='<g stroke="#b5b3ae" stroke-opacity=".45" stroke-width="1"><path d="M670 258.500H2564M753.500 124V604M1163.500 124V604M1573.500 124V604M1981.500 124V604M2391.500 124V604"/></g>';

// Route shields
const pill=(k,list)=>g(k,list.map(([x,y,t])=>{const w=t.length>2?98:78;return `<rect x="${x-w/2}" y="${y-32}" width="${w}" height="64" rx="31" fill="#6b6b6c" stroke="#2b2c2d" stroke-width="4"/><text x="${x}" y="${y+15}" font-size="44" text-anchor="middle" fill="#28292a">${t}</text>`}).join(''));
const us=(k,list)=>g(k,list.map(([x,y,t])=>{const e=t.length>2?5:0;return `<path transform="translate(${x},${y})" d="M${-30-e} -37Q-15 -29 0 -37Q15 -29 ${30+e} -37L${41+e} -27Q${35+e} -12 ${42+e} 8Q${45+e} 30 ${24+e} 33Q8 33 0 39Q-8 33 ${-24-e} 33Q${-45-e} 30 ${-42-e} 8Q${-35-e} -12 ${-41-e} -27Z" fill="#6b6b6c" stroke="#2b2c2d" stroke-width="4"/><text x="${x}" y="${y+17}" font-size="44" text-anchor="middle" fill="#28292a">${t}</text>`}).join(''));
const inter=(k,list)=>g(k,list.map(([x,y,t])=>{const s=t.length>2?1.42:1;return `<g transform="translate(${x},${y}) scale(${s},1)"><path d="M-35 -37Q-26 -27 -17 -31Q-8 -28 0 -36Q8 -28 17 -31Q26 -27 35 -37L38 -22H-38Z" fill="#5a3535"/><path d="M-38 -19H38Q40 24 0 38Q-40 24 -38 -19Z" fill="#2b3545"/><path d="M-38 -21H38" stroke="#77777a" stroke-width="2.500"/></g><text x="${x}" y="${y+20}" font-size="45" font-weight="500" text-anchor="middle" fill="#94969a">${t}</text>`}).join(''));
pill('A',[[364,227,'21']]); us('A',[[68,300,'290'],[1101,362,'290'],[484,643,'77']]);
pill('B',[[216,190,'105'],[840,54,'105'],[1375,22,'105'],[526,407,'6'],[72,628,'36'],[365,709,'159'],[1138,632,'99']]);
pill('C',[[476,73,'105'],[1386,114,'146']]); inter('C',[[642,298,'69']]); us('C',[[1062,717,'90']]);
pill('D',[[618,217,'326'],[746,300,'421'],[369,363,'105'],[760,465,'105'],[547,561,'326']]); us('D',[[943,443,'96'],[486,671,'90'],[1173,712,'96']]);
pill('G',[[351,116,'71'],[966,116,'159'],[1200,735,'71']]); inter('G',[[950,613,'10']]);
inter('H',[[41,516,'10'],[512,444,'10'],[1170,422,'10'],[1366,422,'10'],[1386,706,'69']]); pill('H',[[1148,690,'99']]);
inter('I',[[414,160,'69'],[271,310,'45'],[838,406,'10'],[343,627,'610']]); pill('I',[[1110,42,'146'],[1170,492,'99']]); us('I',[[132,728,'90']]);
g('I','<rect x="92" y="641" width="80" height="40" fill="#6b6b6c" stroke="#28292a" stroke-width="4"/><text x="132" y="672" font-size="32" font-weight="700" text-anchor="middle" fill="#28292a">ALT</text>');
pill('J',[[1362,127,'73'],[775,342,'73'],[604,658,'124'],[1422,520,'87']]);

// Place names: text, left, right, baseline, size, colour, weight
const names=(k,list)=>g(k,list.map(([t,a,b,y,s=57,c='#2c2e2f',w=400])=>`<text x="${a}" y="${y}" font-size="${s}" font-weight="${w}" fill="${c}" textLength="${b-a}" lengthAdjust="spacingAndGlyphs" paint-order="stroke" stroke="#6e6d69" stroke-opacity=".75" stroke-width="9" stroke-linejoin="round">${t}</text>`).join(''));
names('A',[['Giddings',332,556,392],['Carmine',777,990,459],['Round Top',729,1004,629],['Brenham',1276,1505,422],['Somerville',1030,1293,60],['Smithville',-63,180,742]]);
names('B',[['Todd Mission',768,1114,231],['Magnolia',963,1197,336],['Prairie View',516,816,572],['Waller',694,850,646],['Tomball',1212,1417,564]]);
names('C',[['Conroe',55,250,130,60,'#26282a'],['Cleveland',676,920,68],['The',92,193,394,60,'#202122'],['Woodlands',-8,298,456,60,'#202122'],['Spring',134,305,598,60,'#26282a'],['Humble',394,590,762],['Moss Hill',1281,1517,261],['Hardin',1322,1487,451],['Liberty',1220,1390,643]]);
names('D',[['Lumberton',769,1045,223],['Silsbee',853,1036,52],['Sour Lake',413,667,476],['Daisetta',28,236,530],['China',598,741,663],['Vidor',1162,1297,494],['Beaumont',884,1186,601,67,'#1c1e1f']]);
names('G',[['La Grange',420,680,203],['Ellinger',760,944,335],['Schulenburg',347,666,652],['Columbus',1012,1268,603],['Flatonia',44,245,642]]);
names('H',[['Bellville',97,290,110],['Cypress',1078,1281,68],['Sealy',302,437,453],['Brookshire',594,868,442],['Katy',893,1006,442]]);
names('I',[['Houston',160,447,500,74,'#181a1b',500],['Mont Belvieu',976,1304,318],['Baytown',870,1105,543,61,'#232526'],['Pasadena',449,721,635,61,'#232526'],['Anahuac',1393,1616,468]]);
g('I','<text transform="translate(1345,700) rotate(-69)" font-size="54" fill="#213449" textLength="215" lengthAdjust="spacingAndGlyphs">Trinity Bay</text>');
names('J',[['Nederland',1143,1417,63],['Port Arthur',1209,1520,242,61,'#202223'],['Hamshire',594,839,294],['Winnie',500,671,373],['McFaddin',964,1236,516,57,'#1f3326'],['National',983,1213,578,57,'#1f3326'],['Wildlife',998,1200,641,57,'#1f3326'],['Refuge',1004,1195,704,57,'#1f3326']]);

// Watermark row
for(const x of [381,790.5,1200.5,1610.5,2018.5,2428.5]) out+=`<text x="${x}" y="471.500" font-family="Liberation Sans" font-size="24.800" fill="#fff" fill-opacity=".52" textLength="337" lengthAdjust="spacingAndGlyphs">For development purposes only</text>`;

// Markers, anchored at the tip
const pin=(k,x,y,c)=>g(k,`<g transform="translate(${x},${y})"><path d="M0 0C-3 -45 -41 -62 -41 -105A41 41 0 1 1 41 -105C41 -62 3 -45 0 0Z" fill="${c}" stroke="#0a0a0a" stroke-width="4"/><path d="M0 4C-3 -18 -4 -24 -7 -32L7 -32C4 -24 3 -18 0 4Z" fill="#0a0a0a" fill-opacity=".75"/><circle cy="-105" r="12" fill="#0a0a0a"/></g>`);
pin('C',138,467,'#fdf07a'); pin('H',1425,325,'#fdf07a'); pin('H',1389,398,'#6b93fa'); pin('H',1245,423,'#66e564');

// Provider mark
g('G','<text x="62" y="694" font-family="Lato" font-size="98" font-weight="700" textLength="298" lengthAdjust="spacingAndGlyphs" paint-order="stroke" stroke="#c6c6c4" stroke-width="20" stroke-linejoin="round" fill="#c6c6c4">Google</text><text x="62" y="694" font-family="Lato" font-size="98" font-weight="700" textLength="298" lengthAdjust="spacingAndGlyphs"><tspan fill="#4a86ee">G</tspan><tspan fill="#df4c3c">o</tspan><tspan fill="#f2b632">o</tspan><tspan fill="#4a86ee">g</tspan><tspan fill="#3fa757">l</tspan><tspan fill="#df4c3c">e</tspan></text>');

document.getElementById('map').innerHTML=out;
</script>
</body>
</html>
